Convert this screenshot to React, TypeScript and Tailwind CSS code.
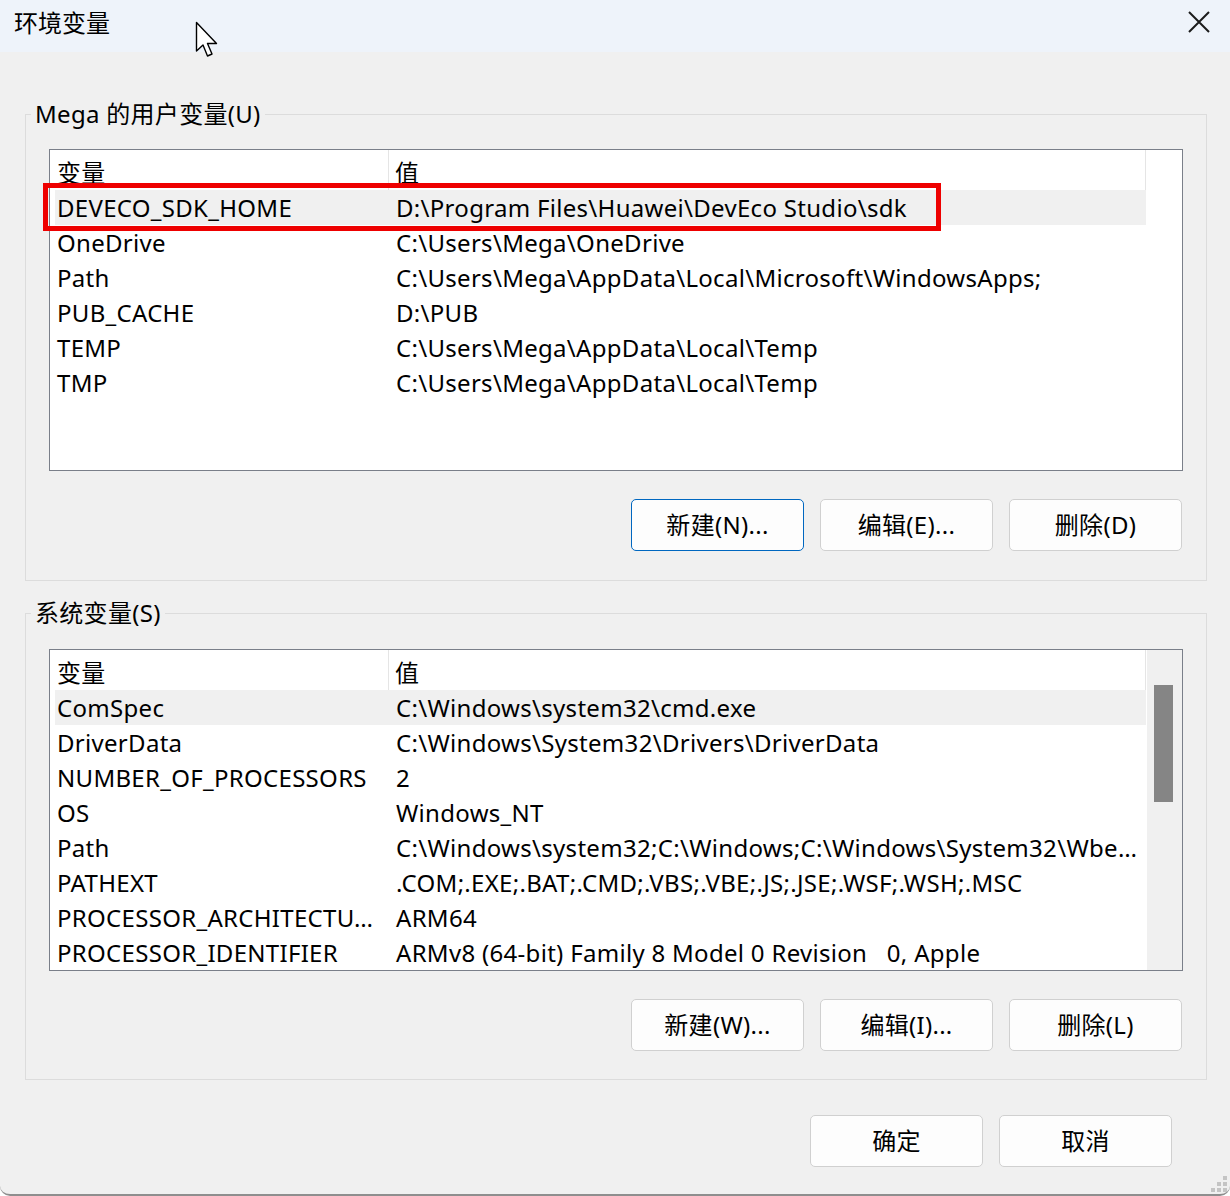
import React from "react";

type Row = { name: string; value: string };

const userVars: Row[] = [
  { name: "DEVECO_SDK_HOME", value: "D:\\Program Files\\Huawei\\DevEco Studio\\sdk" },
  { name: "OneDrive", value: "C:\\Users\\Mega\\OneDrive" },
  { name: "Path", value: "C:\\Users\\Mega\\AppData\\Local\\Microsoft\\WindowsApps;" },
  { name: "PUB_CACHE", value: "D:\\PUB" },
  { name: "TEMP", value: "C:\\Users\\Mega\\AppData\\Local\\Temp" },
  { name: "TMP", value: "C:\\Users\\Mega\\AppData\\Local\\Temp" },
];

const sysVars: Row[] = [
  { name: "ComSpec", value: "C:\\Windows\\system32\\cmd.exe" },
  { name: "DriverData", value: "C:\\Windows\\System32\\Drivers\\DriverData" },
  { name: "NUMBER_OF_PROCESSORS", value: "2" },
  { name: "OS", value: "Windows_NT" },
  { name: "Path", value: "C:\\Windows\\system32;C:\\Windows;C:\\Windows\\System32\\Wbe…" },
  { name: "PATHEXT", value: ".COM;.EXE;.BAT;.CMD;.VBS;.VBE;.JS;.JSE;.WSF;.WSH;.MSC" },
  { name: "PROCESSOR_ARCHITECTU…", value: "ARM64" },
  { name: "PROCESSOR_IDENTIFIER", value: "ARMv8 (64-bit) Family 8 Model 0 Revision   0, Apple" },
];

function Btn({ label, focused }: { label: string; focused?: boolean }) {
  return (
    <div
      className={
        "w-[173px] h-[52px] rounded-[5px] bg-[#fdfdfd] border flex items-center justify-center text-black " +
        (focused ? "border-[#0067c0]" : "border-[#d0d0d0]")
      }
    >
      {label}
    </div>
  );
}

function VarList({ rows, scroll, marked }: { rows: Row[]; scroll?: boolean; marked?: boolean }) {
  return (
    <div className="relative h-[322px] border border-[#7a7f89] bg-white flex">
      <div className="w-[1096px] flex flex-col overflow-hidden">
        <div className="h-[40px] flex shrink-0">
          <div className="w-[339px] pl-[7px] pt-[5px] border-r border-[#e5e5e5]">变量</div>
          <div className="flex-1 pl-[6px] pt-[5px] border-r border-[#e5e5e5]">值</div>
        </div>
        {rows.map((r, i) => (
          <div
            key={r.name}
            className={"ml-[5px] h-[35px] shrink-0 flex items-center " + (i === 0 ? "bg-[#f0f0f0]" : "")}
          >
            <div className="w-[334px] pl-[2px] whitespace-nowrap overflow-hidden">{r.name}</div>
            <div className="flex-1 pl-[7px] whitespace-pre">{r.value}</div>
          </div>
        ))}
      </div>
      {scroll && (
        <div className="ml-[1px] flex-1 bg-[#f0f0f0] pt-[35px] pl-[7px]">
          <div className="w-[19px] h-[117px] bg-[#858585]" />
        </div>
      )}
      {marked && (
        <div className="absolute left-[-7px] top-[33px] w-[898px] h-[48px] border-[5px] border-[#ee0000]" />
      )}
    </div>
  );
}

export default function App() {
  return (
    <div
      className="relative w-[1230px] h-[1196px] overflow-hidden bg-white text-[24px] tracking-[0.3px] text-black"
      style={{ fontFamily: '"Noto Sans", "Noto Sans CJK SC", sans-serif' }}
    >
      <div className="h-[1196px] bg-[#f0f0f0] rounded-b-[10px] border-b-2 border-[#8e8e8e] flex flex-col">
        {/* title bar */}
        <div className="h-[52px] shrink-0 bg-[#eef3fa] flex items-center justify-between pl-[14px] pr-[20px]">
          <div className="text-[24px] tracking-normal -mt-[6px]">环境变量</div>
          <svg width="22" height="22" viewBox="0 0 22 22" className="-mt-[8px]">
            <path d="M1 1 L21 21 M21 1 L1 21" stroke="#1b1b1b" strokeWidth="2" />
          </svg>
        </div>

        <div className="pl-[25px] pr-[23px] flex flex-col">
          <fieldset className="mt-[47px] border border-[#dcdcdc] px-[23px] pb-[29px]">
            <legend className="-ml-[18px] px-[4px] h-[30px] leading-[30px]">Mega 的用户变量(U)</legend>
            <div className="mt-[20px]">
              <VarList rows={userVars} marked />
            </div>
            <div className="mt-[28px] mr-[1px] flex justify-end gap-[16px]">
              <Btn label="新建(N)..." focused />
              <Btn label="编辑(E)..." />
              <Btn label="删除(D)" />
            </div>
          </fieldset>

          <fieldset className="mt-[17px] border border-[#dcdcdc] px-[23px] pb-[28px]">
            <legend className="-ml-[18px] px-[4px] h-[30px] leading-[30px]">系统变量(S)</legend>
            <div className="mt-[21px]">
              <VarList rows={sysVars} scroll />
            </div>
            <div className="mt-[28px] mr-[1px] flex justify-end gap-[16px]">
              <Btn label="新建(W)..." />
              <Btn label="编辑(I)..." />
              <Btn label="删除(L)" />
            </div>
          </fieldset>

          <div className="mt-[35px] pr-[35px] flex justify-end gap-[16px]">
            <Btn label="确定" />
            <Btn label="取消" />
          </div>
        </div>
      </div>

      {/* mouse pointer */}
      <svg className="absolute left-[195px] top-[21px]" width="28" height="40" viewBox="0 0 28 40">
        <path
          d="M1.5 1.5 L1.5 30 L8 24 L12.5 35 L17 33 L12.5 22.5 L21.5 22.5 Z"
          fill="#ffffff"
          stroke="#000000"
          strokeWidth="1.4"
          strokeLinejoin="round"
        />
      </svg>

      {/* resize grip */}
      <svg className="absolute right-[2px] bottom-[3px]" width="18" height="18" viewBox="0 0 18 18">
        <g fill="#c4c4c4">
          <rect x="13" y="1" width="4" height="4" />
          <rect x="7" y="7" width="4" height="4" />
          <rect x="13" y="7" width="4" height="4" />
          <rect x="1" y="13" width="4" height="4" />
          <rect x="7" y="13" width="4" height="4" />
          <rect x="13" y="13" width="4" height="4" />
        </g>
      </svg>
    </div>
  );
}
